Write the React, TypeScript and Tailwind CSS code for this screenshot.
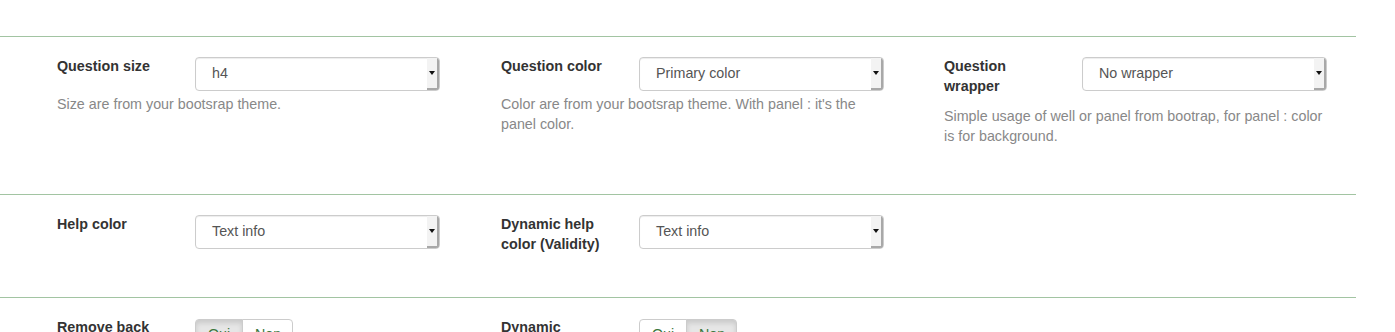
import type { ReactNode } from 'react'

const font = { fontFamily: '"Liberation Sans", Arial, sans-serif' }

function Select({ value }: { value: string }) {
  return (
    <div className="mt-px flex h-[34px] w-[245px] shrink-0 items-stretch overflow-hidden rounded-[4px] border border-[#ccc] bg-white shadow-[inset_0_1px_1px_rgba(0,0,0,0.075)]">
      <span className="flex-1 pl-4 pt-[5px] text-[14.3px] leading-5 text-[#555]">{value}</span>
      <span className="flex w-[12px] items-center justify-center border-r-2 border-b-2 border-[#a8a8a8] bg-[#f3f3f3]">
        <svg width="6" height="4" viewBox="0 0 6 4">
          <path d="M0 0h6L3 4z" fill="#111" />
        </svg>
      </span>
    </div>
  )
}

function Toggle({ on }: { on: 'oui' | 'non' }) {
  const base = 'h-[34px] border border-[#ccc] px-3 pt-[4px] text-[14.3px] leading-5 text-[#3c763d]'
  const active = 'bg-[#e6e6e6] shadow-[inset_0_3px_5px_rgba(0,0,0,0.125)]'
  return (
    <div className="mt-[2px] flex">
      <span className={`${base} w-[48px] rounded-l-[4px] ${on === 'oui' ? active : 'bg-white'}`}>Oui</span>
      <span className={`${base} -ml-px w-[51px] rounded-r-[4px] ${on === 'non' ? active : 'bg-white'}`}>Non</span>
    </div>
  )
}

function Field({ label, help, children }: { label: string; help?: string; children: ReactNode }) {
  return (
    <div>
      <div className="flex items-start">
        <label className="mr-[30px] w-[108px] shrink-0 pb-[7px] text-[14.3px] font-bold leading-5 text-[#333]">{label}</label>
        {children}
      </div>
      {help && <p className="mt-[3px] w-[386px] text-[14.3px] leading-5 text-[#888]">{help}</p>}
    </div>
  )
}

function Row({ pb, children }: { pb: string; children: ReactNode }) {
  return (
    <div className={`grid grid-cols-[444px_443px_1fr] border-t border-[#a2c4a2] pl-[57px] pt-[19px] ${pb}`}>
      {children}
    </div>
  )
}

export default function App() {
  return (
    <div className="h-[332px] w-[1395px] overflow-hidden bg-white pt-[36px]" style={font}>
      <div className="w-[1356px]">
        <Row pb="pb-[48px]">
          <Field label="Question size" help="Size are from your bootsrap theme.">
            <Select value="h4" />
          </Field>
          <Field label="Question color" help="Color are from your bootsrap theme. With panel : it's the panel color.">
            <Select value="Primary color" />
          </Field>
          <Field
            label="Question wrapper"
            help="Simple usage of well or panel from bootrap, for panel : color is for background."
          >
            <Select value="No wrapper" />
          </Field>
        </Row>
        <Row pb="pb-[36px]">
          <Field label="Help color">
            <Select value="Text info" />
          </Field>
          <Field label="Dynamic help color (Validity)">
            <Select value="Text info" />
          </Field>
          <div />
        </Row>
        <Row pb="pb-10">
          <Field label="Remove back button">
            <Toggle on="oui" />
          </Field>
          <Field label="Dynamic required">
            <Toggle on="non" />
          </Field>
          <div />
        </Row>
      </div>
    </div>
  )
}
